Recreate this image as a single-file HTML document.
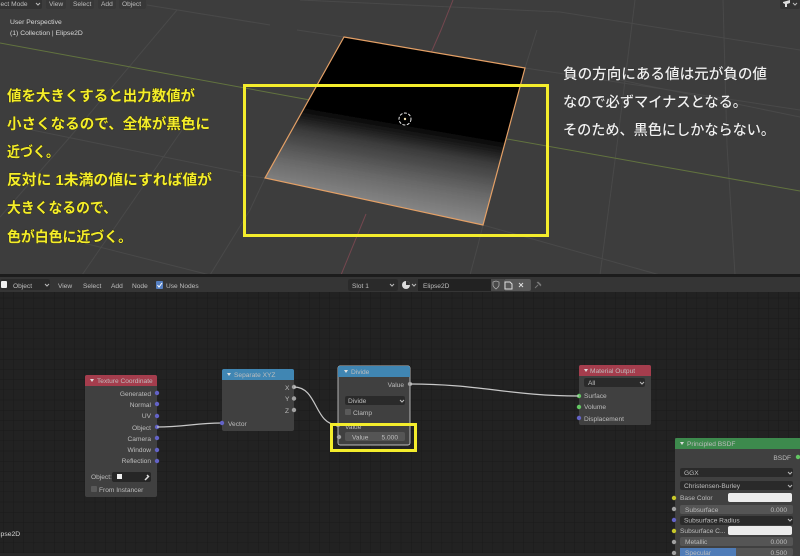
<!DOCTYPE html>
<html><head><meta charset="utf-8"><style>
html,body{margin:0;padding:0;background:#222}
svg{display:block}
text{font-family:"Liberation Sans","Noto Sans CJK JP",sans-serif}
.u{font-size:6.6px;fill:#bdbdbd}
.w{font-size:6.8px;fill:#d8d8d8}
.jy{font-size:14.5px;font-weight:700;fill:#f4ed2c;stroke:#2e2c12;stroke-width:.8px;paint-order:stroke}
.jw{font-size:14.5px;font-weight:500;fill:#f0f0f0;stroke:#2a2a2a;stroke-width:.6px;paint-order:stroke}
</style></head><body>
<svg width="800" height="556" viewBox="0 0 800 556" xmlns="http://www.w3.org/2000/svg">
<defs>
<pattern id="g" width="10.2" height="10.2" patternUnits="userSpaceOnUse" x="3" y="2"><path d="M0 0H10.2M0 0V10.2" stroke="#1a1a1a" stroke-width="1" fill="none"/></pattern>
<linearGradient id="pl" gradientUnits="userSpaceOnUse" x1="400" y1="119" x2="384" y2="212"><stop offset="0" stop-color="#000"/><stop offset=".06" stop-color="#060606"/><stop offset=".3" stop-color="#3c3c3c"/><stop offset=".65" stop-color="#6a6a6a"/><stop offset="1" stop-color="#8c8c8c"/></linearGradient>
<filter id="b" x="-5%" y="-5%" width="110%" height="110%"><feGaussianBlur stdDeviation=".35"/></filter>
</defs>
<rect width="800" height="276" fill="#3d3d3d"/>
<g stroke="#494949" stroke-width="1" fill="none">
<path d="M147 5L270 25M32 130L243 173M60 237L210 275M70 137L0 217M182 130L82 275M250 210L210 275M177 10L70 137M297 30L344 37M525 68L800 110M537 30L525 68M240 175L265 178M265 178L250 210M483 225L478 245L470 275M483 225L660 275M635 0L617 145L600 275M723 0L727 145L735 275M560 12L800 50M300 0L560 12M620 80L800 117"/>
</g>
<path d="M0 43L310 100M507 139L800 191" stroke="#62733f" stroke-width="1" fill="none"/>
<path d="M453 0L441 30L427 62M366 214L341 275" stroke="#74474f" stroke-width="1" fill="none"/>
<g filter="url(#b)">
<polygon points="344,37 525,68 483,225 265,178" fill="url(#pl)" stroke="#e4a066" stroke-width="1.200"/>
<circle cx="405" cy="119" r="6" fill="none" stroke="#e8e8e8" stroke-width="1" stroke-dasharray="3 1.500"/>
<circle cx="405" cy="119" r="1.200" fill="#f0e0b0"/>
</g>
<rect x="244.500" y="85.500" width="303" height="150" fill="none" stroke="#f4ed2c" stroke-width="3"/>

<!-- top header -->
<g filter="url(#b)">
<rect x="-5" y="-6" width="47" height="15" rx="2" fill="#333"/>
<rect x="46" y="-6" width="20" height="15" rx="2" fill="#383838"/><rect x="70" y="-6" width="24" height="15" rx="2" fill="#383838"/><rect x="98" y="-6" width="18" height="15" rx="2" fill="#383838"/><rect x="119" y="-6" width="27" height="15" rx="2" fill="#383838"/>
<text class="u" x="-1" y="6">ject Mode</text>
<path d="M36 3l2 2 2-2" stroke="#bbb" fill="none"/>
<text class="u" x="49" y="6">View</text><text class="u" x="73" y="6">Select</text><text class="u" x="101" y="6">Add</text><text class="u" x="122" y="6">Object</text>
<text class="w" x="10" y="24">User Perspective</text>
<text class="w" x="10" y="35">(1) Collection | Elipse2D</text>
<rect x="780" y="-3" width="20" height="12" rx="2" fill="#333"/><path d="M783 2l7-2v3l-3 1v3h-2v-3l-2-1z" fill="#ddd"/><path d="M793 3l2 2 2-2" stroke="#bbb" fill="none"/>

<!-- yellow text -->
<text class="jy" x="7" y="101" textLength="188" lengthAdjust="spacingAndGlyphs">値を大きくすると出力数値が</text>
<text class="jy" x="7" y="129" textLength="203" lengthAdjust="spacingAndGlyphs">小さくなるので、全体が黒色に</text>
<text class="jy" x="7" y="157" textLength="52" lengthAdjust="spacingAndGlyphs">近づく。</text>
<text class="jy" x="7" y="185" textLength="205" lengthAdjust="spacingAndGlyphs">反対に 1未満の値にすれば値が</text>
<text class="jy" x="7" y="213" textLength="110" lengthAdjust="spacingAndGlyphs">大きくなるので、</text>
<text class="jy" x="7" y="242" textLength="125" lengthAdjust="spacingAndGlyphs">色が白色に近づく。</text>
<text class="jw" x="563" y="79" textLength="204" lengthAdjust="spacingAndGlyphs">負の方向にある値は元が負の値</text>
<text class="jw" x="563" y="107" textLength="184" lengthAdjust="spacingAndGlyphs">なので必ずマイナスとなる。</text>
<text class="jw" x="563" y="135" textLength="212" lengthAdjust="spacingAndGlyphs">そのため、黒色にしかならない。</text>
</g>

<!-- node editor -->
<rect y="292" width="800" height="264" fill="#222"/>
<rect y="292" width="800" height="264" fill="url(#g)"/>
<rect y="274" width="800" height="3" fill="#1c1c1c"/>
<rect y="277" width="800" height="15" fill="#353535"/>
<rect y="553" width="800" height="3" fill="#282828"/>
<g filter="url(#b)">
<rect x="0" y="279" width="50" height="11" rx="2" fill="#2c2c2c"/>
<rect x="1" y="281" width="6" height="7" rx="1" fill="#eee"/>
<text class="u" x="13" y="288">Object</text><path d="M45 284l2 2 2-2" stroke="#bbb" fill="none"/>
<text class="u" x="58" y="288">View</text><text class="u" x="83" y="288">Select</text><text class="u" x="111" y="288">Add</text><text class="u" x="132" y="288">Node</text>
<rect x="156" y="281" width="7" height="8" rx="1" fill="#5680c2"/><path d="M157.500 285l1.500 2 3-4" stroke="#fff" fill="none"/>
<text class="u" x="166" y="288">Use Nodes</text>
<rect x="348" y="279" width="50" height="12" rx="2" fill="#2c2c2c"/><text class="u" x="352" y="288">Slot 1</text><path d="M390 284l2 2 2-2" stroke="#bbb" fill="none"/>
<rect x="400" y="279" width="18" height="12" rx="2" fill="#333"/><circle cx="406" cy="285" r="4" fill="#ddd"/><path d="M406 281a4 4 0 0 1 4 4h-4z" fill="#333"/><path d="M412 284l2 2 2-2" stroke="#bbb" fill="none"/>
<rect x="418" y="279" width="73" height="12" fill="#242424"/><text class="u" x="423" y="288">Elipse2D</text>
<rect x="491" y="279" width="13" height="12" fill="#484848"/>
<rect x="504" y="279" width="27" height="12" rx="2" fill="#585858"/>
<path d="M493 282l3-1 3 1v3c0 2-2 3-3 4-1-1-3-2-3-4z" fill="none" stroke="#aaa" stroke-width=".8"/>
<path d="M505 282h5l2 2v5h-7z" fill="none" stroke="#ddd" stroke-width="1"/>
<path d="M519 283l4 4m0-4l-4 4" stroke="#ddd"/>
<path d="M535 288l3-3m-1-3l4 4m-3-4l3 3" stroke="#777" fill="none"/>
<text class="w" x="-7" y="536">Elipse2D</text>

<!-- Texture Coordinate -->
<rect x="85" y="375" width="72" height="122" rx="2" fill="#404040"/>
<path d="M85 386v-9a2 2 0 0 1 2-2h68a2 2 0 0 1 2 2v9z" fill="#a53d4d"/>
<path d="M90 379h4l-2 3z" fill="#ddd"/><text class="u" x="97" y="383">Texture Coordinate</text>
<g text-anchor="end"><text class="u" x="151" y="396">Generated</text><text class="u" x="151" y="407">Normal</text><text class="u" x="151" y="418">UV</text><text class="u" x="151" y="430">Object</text><text class="u" x="151" y="441">Camera</text><text class="u" x="151" y="452">Window</text><text class="u" x="151" y="463">Reflection</text></g>
<g fill="#6363c7"><circle cx="157" cy="393" r="2.200"/><circle cx="157" cy="404" r="2.200"/><circle cx="157" cy="416" r="2.200"/><circle cx="157" cy="427" r="2.200"/><circle cx="157" cy="438" r="2.200"/><circle cx="157" cy="450" r="2.200"/><circle cx="157" cy="461" r="2.200"/></g>
<text class="u" x="91" y="479">Object:</text>
<rect x="112" y="472" width="39" height="10" rx="2" fill="#262626"/><rect x="117" y="474" width="5" height="5" fill="#eee"/><path d="M145 480l4-4m-2-1l2 2" stroke="#ddd" stroke-width="1.500"/>
<rect x="91" y="486" width="6" height="6" rx="1" fill="#5a5a5a"/><text class="u" x="99" y="492">From Instancer</text>

<!-- Separate XYZ -->
<rect x="222" y="369" width="72" height="62" rx="2" fill="#404040"/>
<path d="M222 380v-9a2 2 0 0 1 2-2h68a2 2 0 0 1 2 2v9z" fill="#3f86b3"/>
<path d="M227 373h4l-2 3z" fill="#ddd"/><text class="u" x="234" y="377">Separate XYZ</text>
<text class="u" x="285" y="390">X</text><text class="u" x="285" y="401">Y</text><text class="u" x="285" y="413">Z</text>
<text class="u" x="228" y="426">Vector</text>
<circle cx="294" cy="387" r="2.200" fill="#a1a1a1"/><circle cx="294" cy="398.500" r="2.200" fill="#a1a1a1"/><circle cx="294" cy="410" r="2.200" fill="#a1a1a1"/>

<!-- Divide -->
<rect x="338" y="366" width="72" height="79" rx="2" fill="#404040" stroke="#e8e8e8" stroke-width=".7"/>
<path d="M338 377v-9a2 2 0 0 1 2-2h68a2 2 0 0 1 2 2v9z" fill="#3f86b3"/>
<path d="M344 370h4l-2 3z" fill="#ddd"/><text class="u" x="351" y="374">Divide</text>
<text class="u" x="404" y="387" text-anchor="end">Value</text>
<rect x="345" y="396" width="60" height="9" rx="2" fill="#2c2c2c"/><text class="u" x="348" y="403">Divide</text><path d="M400 400l2 2 2-2" stroke="#bbb" fill="none"/>
<rect x="345" y="409" width="6" height="6" rx="1" fill="#5a5a5a"/><text class="u" x="353" y="415">Clamp</text>
<text class="u" x="345" y="429">Value</text>
<rect x="345" y="432" width="60" height="9" rx="2" fill="#545454"/><text class="u" x="352" y="439.500">Value</text><text class="u" x="398" y="439.500" text-anchor="end">5.000</text>
<circle cx="410" cy="384" r="2.200" fill="#a1a1a1"/><circle cx="338" cy="425" r="2.200" fill="#a1a1a1"/><circle cx="339" cy="437" r="2.200" fill="#a1a1a1"/>

<!-- Material Output -->
<rect x="579" y="365" width="72" height="60" rx="2" fill="#404040"/>
<path d="M579 376v-9a2 2 0 0 1 2-2h68a2 2 0 0 1 2 2v9z" fill="#a53d4d"/>
<path d="M584 369h4l-2 3z" fill="#ddd"/><text class="u" x="590" y="373">Material Output</text>
<rect x="584" y="378" width="61" height="9" rx="2" fill="#2c2c2c"/><text class="u" x="588" y="385">All</text><path d="M640 382l2 2 2-2" stroke="#bbb" fill="none"/>
<text class="u" x="584" y="398">Surface</text><text class="u" x="584" y="409">Volume</text><text class="u" x="584" y="421">Displacement</text>
<circle cx="579" cy="396" r="2.200" fill="#63c763"/><circle cx="579" cy="407" r="2.200" fill="#63c763"/><circle cx="579" cy="418" r="2.200" fill="#6363c7"/>

<!-- Principled -->
<rect x="675" y="438" width="125" height="118" fill="#404040"/>
<path d="M675 449v-9a2 2 0 0 1 2-2h123v11z" fill="#3e8a4e"/>
<path d="M680 442h4l-2 3z" fill="#ddd"/><text class="u" x="687" y="446">Principled BSDF</text>
<text class="u" x="791" y="460" text-anchor="end">BSDF</text><circle cx="798" cy="457" r="2.200" fill="#63c763"/>
<rect x="680" y="468" width="113" height="9" rx="2" fill="#2c2c2c"/><text class="u" x="684" y="475">GGX</text><path d="M788 472l2 2 2-2" stroke="#bbb" fill="none"/>
<rect x="680" y="481" width="113" height="9" rx="2" fill="#2c2c2c"/><text class="u" x="684" y="488">Christensen-Burley</text><path d="M788 485l2 2 2-2" stroke="#bbb" fill="none"/>
<text class="u" x="680" y="500">Base Color</text><rect x="728" y="493" width="64" height="9" rx="2" fill="#ececec"/>
<rect x="680" y="505" width="113" height="9" rx="2" fill="#545454"/><text class="u" x="685" y="512">Subsurface</text><text class="u" x="787" y="512" text-anchor="end">0.000</text>
<rect x="680" y="516" width="113" height="9" rx="2" fill="#2c2c2c"/><text class="u" x="684" y="522.500">Subsurface Radius</text><path d="M788 519l2 2 2-2" stroke="#bbb" fill="none"/>
<text class="u" x="680" y="533">Subsurface C...</text><rect x="728" y="526" width="64" height="9" rx="2" fill="#ececec"/>
<rect x="680" y="537" width="113" height="9" rx="2" fill="#545454"/><text class="u" x="685" y="544">Metallic</text><text class="u" x="787" y="544" text-anchor="end">0.000</text>
<rect x="680" y="548" width="113" height="8" rx="2" fill="#545454"/><rect x="680" y="548" width="56" height="8" fill="#4f7cb8"/><text class="u" x="685" y="555">Specular</text><text class="u" x="787" y="555" text-anchor="end">0.500</text>
<circle cx="674" cy="498" r="2.200" fill="#c7c729"/><circle cx="674" cy="509" r="2.200" fill="#a1a1a1"/><circle cx="674" cy="520" r="2.200" fill="#6363c7"/><circle cx="674" cy="531" r="2.200" fill="#c7c729"/><circle cx="674" cy="542" r="2.200" fill="#a1a1a1"/><circle cx="674" cy="553" r="2.200" fill="#a1a1a1"/>

<!-- noodles -->
<g fill="none" stroke="#c8c8c8" stroke-width="1.200">
<path d="M157 427C185 427 195 423 222 423"/>
<path d="M294 387C318 387 314 425 338 425"/>
<path d="M410 384C480 384 510 396 579 396"/>
</g>
<circle cx="222" cy="423" r="2.200" fill="#6363c7"/>
</g>
<rect x="331.500" y="424.500" width="84" height="26" fill="none" stroke="#f4ed2c" stroke-width="3"/>
</svg>
</body></html>
